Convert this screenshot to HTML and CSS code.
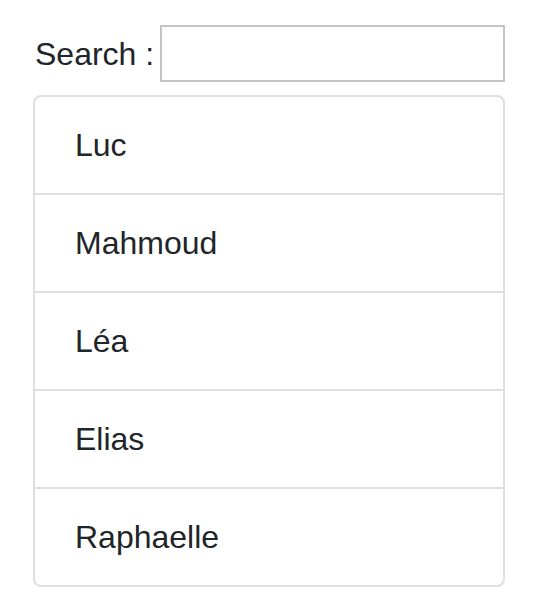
FILE: index.html
```html
<!DOCTYPE html>
<html>
<head>
<meta charset="utf-8">
<link rel="stylesheet" href="styles.css">
</head>
<body>
<div class="page">
  <div class="search-row">
    <label class="search-label" for="q">Search :</label>
    <input id="q" class="search-input" type="text">
  </div>
  <ul class="list-group">
    <li class="list-item">Luc</li>
    <li class="list-item">Mahmoud</li>
    <li class="list-item">Léa</li>
    <li class="list-item">Elias</li>
    <li class="list-item">Raphaelle</li>
  </ul>
</div>
</body>
</html>
```
FILE: styles.css
```css
html, body {
  margin: 0;
  padding: 0;
  background: #fff;
}
body {
  font-family: "Liberation Sans", Arial, sans-serif;
  color: #212529;
  font-size: 32px;
  line-height: 1.5;
}
.page {
  padding: 25px 39px 0 33px;
}
.search-row {
  display: flex;
  align-items: center;
  gap: 6px;
}
.search-label {
  margin-left: 2px;
  white-space: nowrap;
}
.search-input {
  flex: 1;
  min-width: 0;
  width: 0;
  box-sizing: border-box;
  height: 57px;
  margin: 0;
  border: 2px solid #c4c4c4;
  border-radius: 0;
  padding: 0 8px;
  font: inherit;
  background: #fff;
  outline: none;
}
.list-group {
  list-style: none;
  margin: 13px 0 0 0;
  padding: 0;
  border: 2px solid #dfdfdf;
  border-radius: 8px;
}
.list-item {
  padding: 24px 40px;
  line-height: 48px;
  border-top: 2px solid #dfdfdf;
}
.list-item:first-child {
  border-top: none;
}
```
